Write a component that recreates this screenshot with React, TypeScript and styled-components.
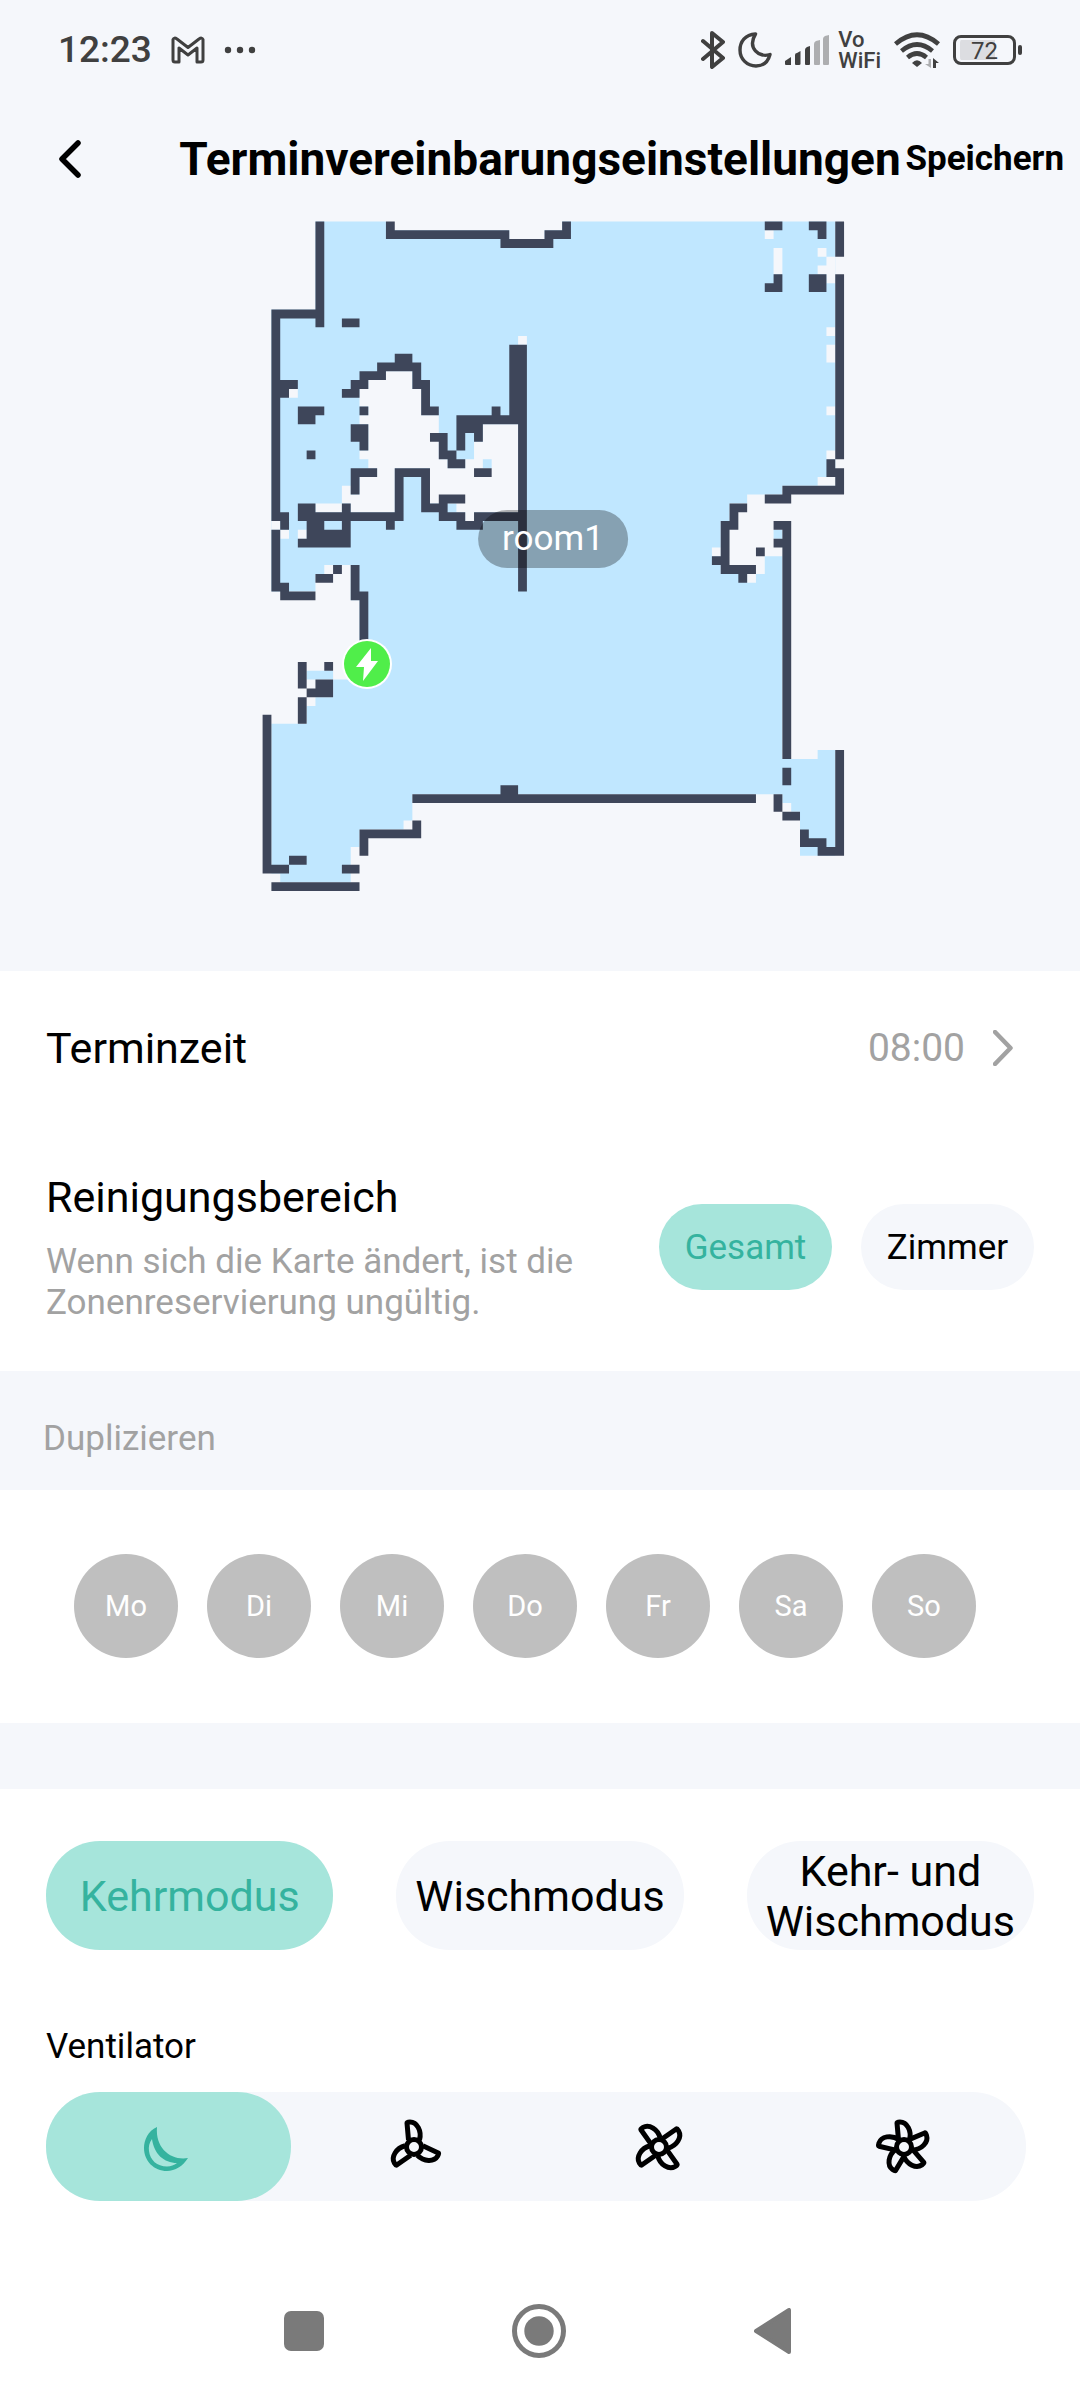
import React, { useState } from 'react';
import styled, { createGlobalStyle } from 'styled-components';

const color = {
  page: '#f5f7fb',
  panel: '#ffffff',
  ink: '#000000',
  muted: '#a2a2a2',
  accentSoft: '#a6e5db',
  accent: '#35b39f',
  day: '#bfbfbf',
  status: '#404040',
  nav: '#7a7a7a',
  floor: '#c0e7ff',
  wall: '#3e465a',
};

const GlobalStyle = createGlobalStyle`
  *, *::before, *::after { box-sizing: border-box; }
  body {
    margin: 0;
    background: ${color.panel};
    color: ${color.ink};
    font-family: Roboto, "Liberation Sans", sans-serif;
  }
  button {
    margin: 0;
    padding: 0;
    border: 0;
    background: none;
    color: inherit;
    font: inherit;
    cursor: pointer;
  }
  svg { display: block; }
`;

const Screen = styled.div`
  display: flex;
  flex-direction: column;
  min-height: 100vh;
`;

const Top = styled.div`
  background: ${color.page};
`;

/* ---------- status bar ---------- */

const StatusBar = styled.div`
  display: flex;
  justify-content: space-between;
  align-items: center;
  height: 100px;
  padding: 0 58px;
  color: ${color.status};
`;

const StatusGroup = styled.div<{ $gap: number }>`
  display: flex;
  align-items: center;
  gap: ${(p) => p.$gap}px;
`;

const Clock = styled.span`
  font-size: 37px;
  font-weight: 500;
  line-height: 44px;
`;

const CallMode = styled.span`
  display: flex;
  flex-direction: column;
  font-size: 22px;
  font-weight: 500;
  line-height: 21px;
`;

const Battery = styled.span`
  display: flex;
  align-items: center;
  gap: 2px;

  &::after {
    content: '';
    width: 4px;
    height: 10px;
    border-radius: 2px;
    background: ${color.status};
  }
`;

const BatteryCell = styled.span`
  display: block;
  width: 63px;
  height: 30px;
  padding: 2px 4px;
  border: 3px solid ${color.status};
  border-radius: 8px;
  background: linear-gradient(90deg, #dcdde1 72%, transparent 72%) content-box;
  font-size: 24px;
  line-height: 22px;
  text-align: center;
`;

/* ---------- header ---------- */

const Header = styled.header`
  display: grid;
  grid-template-columns: 1fr auto 1fr;
  align-items: center;
  height: 118px;
  padding: 0 16px;
`;

const BackButton = styled.button`
  justify-self: start;
  padding: 10px 42px;
`;

const Title = styled.h1`
  margin: 0;
  font-size: 46px;
  font-weight: 700;
  line-height: 54px;
`;

const SaveButton = styled.button`
  justify-self: end;
  font-size: 35px;
  font-weight: 700;
  line-height: 42px;
`;

/* ---------- map ---------- */

const MapArea = styled.div`
  position: relative;
  padding-top: 3px;

  svg {
    width: 100%;
    height: auto;
  }
`;

const RoomLabel = styled.span`
  position: absolute;
  left: 51.2%;
  top: 42.6%;
  transform: translate(-50%, -50%);
  padding: 9px 24px;
  border-radius: 30px;
  background: rgba(0, 0, 0, 0.3);
  color: #ffffff;
  font-size: 35px;
  line-height: 40px;
`;

/* ---------- panels ---------- */

const Panel = styled.section<{ $pad: string; $gap?: number }>`
  display: flex;
  flex-direction: column;
  gap: ${(p) => p.$gap ?? 0}px;
  padding: ${(p) => p.$pad};
  background: ${color.panel};
`;

const TimeRow = styled.button`
  display: flex;
  align-items: center;
  gap: 28px;
  padding-right: 21px;
  text-align: left;
`;

const Heading = styled.span`
  flex: 1;
  font-size: 43px;
  line-height: 52px;
`;

const TimeValue = styled.span`
  color: ${color.muted};
  font-size: 39px;
  line-height: 52px;
`;

const AreaRow = styled.div`
  display: flex;
  align-items: center;
  justify-content: space-between;
  gap: 40px;
`;

const AreaText = styled.div`
  flex: 1;
  max-width: 560px;
`;

const AreaTitle = styled.h2`
  margin: 0 0 18px;
  font-size: 43px;
  font-weight: 400;
  line-height: 52px;
`;

const Hint = styled.p`
  margin: 0;
  color: ${color.muted};
  font-size: 35px;
  line-height: 41px;
`;

const PillGroup = styled.div`
  display: flex;
  gap: 29px;
`;

const Pill = styled.button<{ $on: boolean }>`
  width: 173px;
  height: 86px;
  border-radius: 43px;
  background: ${(p) => (p.$on ? color.accentSoft : color.page)};
  color: ${(p) => (p.$on ? color.accent : color.ink)};
  font-size: 35px;
`;

const BandLabel = styled.h2`
  margin: 0;
  padding: 48px 43px 31px;
  background: ${color.page};
  color: ${color.muted};
  font-size: 35px;
  font-weight: 400;
  line-height: 40px;
`;

const Band = styled.div`
  height: 66px;
  background: ${color.page};
`;

const Days = styled.div`
  display: flex;
  gap: 29px;
`;

const Day = styled.button<{ $on: boolean }>`
  width: 104px;
  height: 104px;
  border-radius: 50%;
  background: ${(p) => (p.$on ? color.accent : color.day)};
  color: #ffffff;
  font-size: 29px;
`;

const Modes = styled.div`
  display: grid;
  grid-template-columns: repeat(3, 1fr);
  gap: 63px;
`;

const Mode = styled.button<{ $on: boolean }>`
  height: 109px;
  border-radius: 54px;
  background: ${(p) => (p.$on ? color.accentSoft : color.page)};
  color: ${(p) => (p.$on ? color.accent : color.ink)};
  font-size: 43px;
  line-height: 50px;
`;

const FanTitle = styled.h2`
  margin: 77px 0 25px;
  font-size: 35px;
  font-weight: 400;
  line-height: 40px;
`;

const FanBar = styled.div`
  display: grid;
  grid-template-columns: repeat(4, 1fr);
  margin-right: 8px;
  border-radius: 54px;
  background: ${color.page};
`;

const FanOption = styled.button<{ $on: boolean }>`
  display: grid;
  place-items: center;
  height: 109px;
  border-radius: 54px;
  background: ${(p) => (p.$on ? color.accentSoft : 'transparent')};
  color: ${(p) => (p.$on ? color.accent : color.ink)};
`;

const NavBar = styled.nav`
  display: flex;
  justify-content: center;
  align-items: center;
  gap: 188px;
  height: 138px;
  margin-top: auto;
  padding-right: 4px;
  color: ${color.nav};
`;

/* ---------- floor plan data, in map cells: x, y, width, height ---------- */

type Cell = [number, number, number, number];

const floorOutline =
  'M6 0H14V1H28V2H32V1H34V0H65V30H59V31H55V32H53V34H52V40H55V41H56V40H57V38H59V61H63V60H65V72H61V67H60V66H59V65H17V68H16V69H11V71H10V75H2V74H1V57H5V55H6V54H8V52H11V43H10V39H7V40H6V42H1V10H6Z';

const gaps: Cell[] = [
  [57, 1, 1, 1], [58, 3, 1, 3], [63, 3, 1, 1], [64, 4, 1, 3], [63, 5, 1, 1],
  [64, 12, 1, 1], [64, 14, 1, 2], [64, 21, 1, 1], [64, 26, 1, 1], [63, 29, 2, 1],
  [51, 37, 1, 1], [1, 34, 1, 1], [2, 35, 1, 1], [4, 35, 1, 1], [3, 19, 1, 1],
  [29, 13, 1, 1], [14, 17, 3, 1], [12, 18, 5, 1], [11, 19, 7, 2], [12, 21, 6, 1],
  [11, 22, 9, 1], [12, 23, 8, 3], [11, 26, 9, 1], [12, 27, 9, 1], [13, 28, 2, 1],
  [11, 29, 4, 3], [9, 30, 1, 2], [10, 31, 1, 1], [6, 32, 3, 1], [10, 32, 5, 1],
  [19, 28, 10, 4], [22, 32, 7, 1], [23, 33, 1, 1], [25, 23, 4, 5], [24, 25, 1, 3],
  [23, 27, 1, 1],
];

const patches: Cell[] = [[25, 27, 1, 1], [58, 35, 1, 1], [5, 51, 3, 1]];

const walls: Cell[] = [
  [6, 0, 1, 12], [14, 0, 1, 2], [14, 1, 14, 1], [27, 2, 6, 1], [32, 1, 3, 1], [34, 0, 1, 2],
  [1, 10, 6, 1], [1, 10, 1, 24], [1, 33, 2, 1], [2, 33, 1, 2], [1, 35, 1, 7], [1, 41, 2, 1],
  [2, 42, 4, 1], [9, 11, 2, 1], [2, 18, 2, 1], [2, 19, 1, 1],
  [15, 15, 2, 1], [13, 16, 5, 1], [11, 17, 3, 1], [17, 17, 1, 1], [10, 18, 2, 1],
  [17, 18, 2, 1], [9, 19, 2, 1], [18, 19, 1, 2], [18, 21, 2, 1], [11, 21, 1, 1],
  [10, 23, 2, 2], [11, 25, 1, 1], [4, 21, 3, 1], [4, 22, 2, 1], [5, 26, 1, 1],
  [10, 28, 3, 1], [10, 29, 1, 2], [15, 28, 4, 1], [15, 28, 1, 6], [18, 28, 1, 5],
  [18, 32, 3, 1], [20, 31, 3, 1], [20, 33, 3, 1], [22, 34, 3, 1], [24, 33, 6, 1],
  [19, 24, 2, 1], [20, 25, 1, 1], [20, 26, 2, 1], [21, 27, 2, 1], [22, 22, 8, 1],
  [22, 23, 3, 1], [22, 24, 1, 2], [24, 24, 1, 1], [26, 21, 1, 1], [28, 14, 2, 9],
  [29, 23, 1, 19], [24, 28, 2, 1], [4, 32, 2, 2], [9, 32, 1, 3], [4, 33, 12, 1],
  [5, 34, 2, 1], [14, 34, 1, 1], [5, 35, 5, 1], [4, 36, 6, 1], [8, 39, 1, 1],
  [6, 40, 2, 1], [10, 39, 1, 4], [10, 42, 2, 1], [11, 42, 1, 6],
  [4, 50, 1, 3], [7, 50, 1, 1], [6, 52, 2, 1], [5, 53, 3, 1], [4, 54, 1, 3],
  [0, 56, 1, 18], [0, 73, 3, 1], [3, 72, 2, 1], [9, 73, 2, 1], [1, 75, 10, 1],
  [11, 69, 7, 1], [17, 68, 1, 1], [11, 70, 1, 2], [17, 65, 39, 1], [27, 64, 2, 1],
  [57, 0, 2, 1], [62, 0, 2, 1], [63, 1, 1, 1], [65, 0, 1, 4], [58, 6, 1, 2], [57, 7, 2, 1],
  [62, 6, 2, 2], [65, 6, 1, 21], [64, 27, 1, 2], [65, 28, 1, 3], [59, 30, 7, 1],
  [57, 31, 3, 1], [53, 32, 2, 1], [53, 33, 1, 1], [52, 34, 2, 1], [52, 35, 1, 5],
  [51, 38, 2, 1], [52, 39, 4, 1], [54, 40, 1, 1], [56, 37, 1, 1], [58, 34, 2, 1],
  [59, 34, 1, 27], [58, 36, 1, 1], [59, 62, 1, 2], [58, 65, 1, 2], [59, 67, 2, 1],
  [61, 69, 1, 2], [61, 70, 3, 1], [63, 71, 3, 1], [65, 60, 1, 12],
];

const cellsPath = (cells: Cell[]) =>
  cells.map(([x, y, w, h]) => `M${x} ${y}h${w}v${h}h${-w}z`).join('');

const FloorPlan = () => (
  <svg viewBox="0 0 1080 750" role="img" aria-label="Karte">
    <g transform="translate(262.6 0.5) scale(8.81)">
      <path d={floorOutline} fill={color.floor} />
      <path d={cellsPath(gaps)} fill={color.page} />
      <path d={cellsPath(patches)} fill={color.floor} />
      <path d={cellsPath(walls)} fill={color.wall} />
    </g>
    <circle cx="367" cy="443" r="25" fill="#fff" />
    <circle cx="367" cy="443" r="23" fill="#50ee4a" />
    <path d="M371 427L356 446H364L363 460L378 440H371Z" fill="#fff" />
  </svg>
);

/* ---------- icons ---------- */

const MailIcon = () => (
  <svg width="34" height="28" viewBox="0 0 34 28" fill="none" stroke="currentColor" strokeWidth="3" strokeLinejoin="round">
    <path d="M2 3.500Q3 1 6 3L17 11.500L28 3Q31 1 32 3.500V24Q32 26 30 26H26V12L17 19L8 12V26H4Q2 26 2 24Z" />
  </svg>
);

const DotsIcon = () => (
  <svg width="32" height="8" viewBox="0 0 32 8" fill="currentColor">
    <circle cx="4" cy="4" r="3.200" />
    <circle cx="16" cy="4" r="3.200" />
    <circle cx="28" cy="4" r="3.200" />
  </svg>
);

const BluetoothIcon = () => (
  <svg width="24" height="40" viewBox="0 0 24 40" fill="none" stroke="currentColor" strokeWidth="4" strokeLinecap="round" strokeLinejoin="round">
    <path d="M2 11L22 28L11 37V3L22 12L2 29" />
  </svg>
);

const QuietIcon = () => (
  <svg width="34" height="36" viewBox="0 0 34 36" fill="none" stroke="currentColor" strokeWidth="3.400" strokeLinejoin="round">
    <path d="M17.500 2C7 2.500 2 10 2 18C2 27 9 34 18 34C25 34 30 30 32 22.500C21 26 9 16 17.500 2Z" />
  </svg>
);

const SignalIcon = () => (
  <svg width="44" height="30" viewBox="0 0 44 30" fill="currentColor">
    <path d="M0 26L6 22V30H1Q0 30 0 29ZM10 20Q10 18 12 18L15.500 16V29Q15.500 30 14 30H11Q10 30 10 29ZM20 15Q20 13 22 12L25 11V29Q25 30 24 30H21Q20 30 20 29Z" />
    <path opacity="0.4" d="M29 9Q29 7 31 6L35 5V29Q35 30 34 30H30Q29 30 29 29ZM38 4Q38 2 40 1L44 0V29Q44 30 43 30H39Q38 30 38 29Z" />
  </svg>
);

const WifiIcon = () => (
  <svg width="46" height="36" viewBox="0 0 46 36" fill="none" stroke="currentColor" strokeWidth="4.600">
    <path d="M1.500 12Q23 -6.500 44.500 12" />
    <path d="M7.500 19Q23 6 38.500 19" />
    <path d="M13.500 25.500Q23 17.500 32.500 25.500" />
    <path d="M18 31Q23 25.500 28 31L23 35Z" fill="currentColor" stroke="none" />
    <path d="M37 27V36L31 32H34.500V27Z" fill="currentColor" stroke="none" opacity="0.4" />
    <path d="M39 36V26L45 31H42V36Z" fill="currentColor" stroke="none" />
  </svg>
);

const BackIcon = () => (
  <svg width="24" height="40" viewBox="0 0 24 40" fill="none" stroke="currentColor" strokeWidth="5.500" strokeLinecap="round" strokeLinejoin="round">
    <path d="M20 4L4 20L20 36" />
  </svg>
);

const ChevronIcon = () => (
  <svg width="20" height="36" viewBox="0 0 20 36" fill="none" stroke={color.muted} strokeWidth="4.500" strokeLinecap="round" strokeLinejoin="round">
    <path d="M2 2L17.500 18L2 34" />
  </svg>
);

const MoonIcon = () => (
  <svg width="50" height="50" viewBox="0 -5 50 50" fill="currentColor" fillRule="evenodd">
    <path d="M13 0C4 4 0 13 0 21C0 34 10 44 23 44C31 44 39 39 44 31C28 34 11 22 13 0ZM8 12C5 16 4.500 20 5 24C6 33 13 39.500 23 39.500C27 39.500 30 38 33 36C20 36 10 27 8 12Z" />
  </svg>
);

const FanIcon = ({ blades, turn }: { blades: number; turn: number }) => (
  <svg width="64" height="64" viewBox="-32 -32 64 64" fill="none" stroke="currentColor" strokeWidth="5" strokeLinejoin="round">
    <circle r="7.500" />
    {Array.from({ length: blades }, (_, i) => (
      <path
        key={i}
        transform={`rotate(${turn + (360 / blades) * i})`}
        d="M-5.500 -7L-7 -24Q-7 -25 -4 -25C3 -25 8 -16 5.500 -7"
      />
    ))}
  </svg>
);

const RecentsIcon = () => (
  <svg width="40" height="40" viewBox="0 0 40 40" fill="currentColor">
    <rect width="40" height="40" rx="7" />
  </svg>
);

const HomeIcon = () => (
  <svg width="54" height="54" viewBox="0 0 54 54" fill="currentColor">
    <circle cx="27" cy="27" r="24.500" fill="none" stroke="currentColor" strokeWidth="5" />
    <circle cx="27" cy="27" r="14.700" />
  </svg>
);

const NavBackIcon = () => (
  <svg width="38" height="46" viewBox="0 0 38 46" fill="currentColor" stroke="currentColor" strokeWidth="4" strokeLinejoin="round">
    <path d="M2 23L35 2V44Z" />
  </svg>
);

const dayNames = ['Mo', 'Di', 'Mi', 'Do', 'Fr', 'Sa', 'So'];
const modeNames = ['Kehrmodus', 'Wischmodus', 'Kehr- und Wischmodus'];
const fanLevels = [
  { name: 'Leise', icon: <MoonIcon /> },
  { name: 'Standard', icon: <FanIcon blades={3} turn={0} /> },
  { name: 'Stark', icon: <FanIcon blades={4} turn={-30} /> },
  { name: 'Maximal', icon: <FanIcon blades={5} turn={0} /> },
];

export default function App() {
  const [area, setArea] = useState('Gesamt');
  const [days, setDays] = useState<string[]>([]);
  const [mode, setMode] = useState(modeNames[0]);
  const [fan, setFan] = useState(0);

  const toggleDay = (day: string) =>
    setDays((list) => (list.includes(day) ? list.filter((d) => d !== day) : [...list, day]));

  return (
    <Screen>
      <GlobalStyle />
      <Top>
        <StatusBar>
          <StatusGroup $gap={19}>
            <Clock>12:23</Clock>
            <MailIcon />
            <DotsIcon />
          </StatusGroup>
          <StatusGroup $gap={13}>
            <BluetoothIcon />
            <QuietIcon />
            <StatusGroup $gap={9}>
              <SignalIcon />
              <CallMode>
                <span>Vo</span>
                <span>WiFi</span>
              </CallMode>
            </StatusGroup>
            <WifiIcon />
            <Battery>
              <BatteryCell>72</BatteryCell>
            </Battery>
          </StatusGroup>
        </StatusBar>
        <Header>
          <BackButton aria-label="Zurück">
            <BackIcon />
          </BackButton>
          <Title>Terminvereinbarungseinstellungen</Title>
          <SaveButton>Speichern</SaveButton>
        </Header>
        <MapArea>
          <FloorPlan />
          <RoomLabel>room1</RoomLabel>
        </MapArea>
      </Top>

      <Panel $pad="51px 46px 48px" $gap={97}>
        <TimeRow>
          <Heading>Terminzeit</Heading>
          <TimeValue>08:00</TimeValue>
          <ChevronIcon />
        </TimeRow>
        <AreaRow>
          <AreaText>
            <AreaTitle>Reinigungsbereich</AreaTitle>
            <Hint>Wenn sich die Karte ändert, ist die Zonenreservierung ungültig.</Hint>
          </AreaText>
          <PillGroup>
            {['Gesamt', 'Zimmer'].map((name) => (
              <Pill key={name} $on={area === name} aria-pressed={area === name} onClick={() => setArea(name)}>
                {name}
              </Pill>
            ))}
          </PillGroup>
        </AreaRow>
      </Panel>

      <BandLabel>Duplizieren</BandLabel>
      <Panel $pad="64px 74px 65px">
        <Days>
          {dayNames.map((day) => (
            <Day key={day} $on={days.includes(day)} aria-pressed={days.includes(day)} onClick={() => toggleDay(day)}>
              {day}
            </Day>
          ))}
        </Days>
      </Panel>
      <Band />

      <Panel $pad="52px 46px 0">
        <Modes>
          {modeNames.map((name) => (
            <Mode key={name} $on={mode === name} aria-pressed={mode === name} onClick={() => setMode(name)}>
              {name}
            </Mode>
          ))}
        </Modes>
        <FanTitle>Ventilator</FanTitle>
        <FanBar>
          {fanLevels.map((level, i) => (
            <FanOption
              key={level.name}
              $on={fan === i}
              aria-label={level.name}
              aria-pressed={fan === i}
              onClick={() => setFan(i)}
            >
              {level.icon}
            </FanOption>
          ))}
        </FanBar>
      </Panel>

      <NavBar>
        <button aria-label="Letzte Apps"><RecentsIcon /></button>
        <button aria-label="Startseite"><HomeIcon /></button>
        <button aria-label="Zurück"><NavBackIcon /></button>
      </NavBar>
    </Screen>
  );
}
